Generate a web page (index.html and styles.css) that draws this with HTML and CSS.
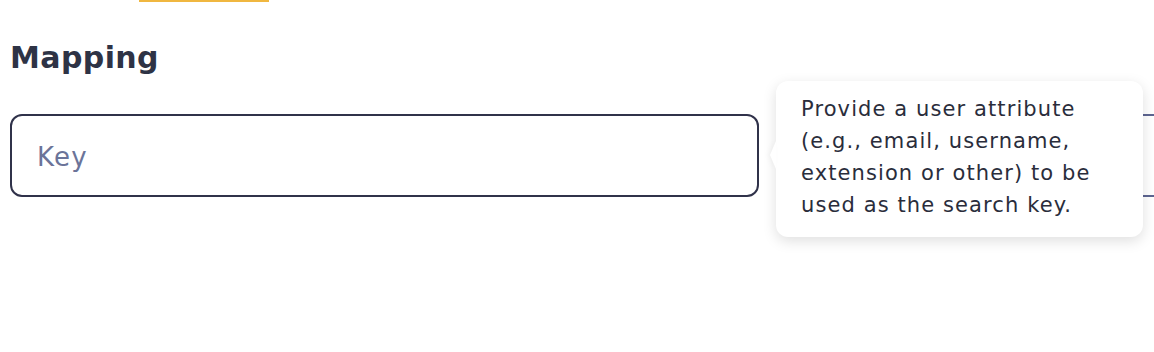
FILE: index.html
```html
<!DOCTYPE html>
<html lang="en">
<head>
  <meta charset="UTF-8">
  <meta name="viewport" content="width=device-width, initial-scale=1.0">
  <title>Mapping</title>
  <link rel="stylesheet" href="styles.css">
</head>
<body>

<div class="tab-indicator"></div>
<h2 class="section-title">Mapping</h2>
<div class="fields">
  <div class="field"><input type="text" class="key-input" placeholder="Key"></div>
  <div class="field field-value">
    <input type="text" class="value-input" placeholder="Value">
    <div class="tooltip">Provide a user attribute (e.g., email, username, extension or other) to be used as the search key.</div>
  </div>
</div>

</body>
</html>
```

FILE: styles.css
```css
html, body { height: 100%; }
body { font-family: "DejaVu Sans", sans-serif; background-color: #fff; margin: 0; padding: 0 0 0 10px; box-sizing: border-box; color: #2e3345; }
.tab-indicator { width: 130px; height: 2px; margin-left: 129px; background-color: #f0b740; }
.section-title { font-size: 30px; font-weight: 600; line-height: 36px; margin: 38px 0 38px; letter-spacing: 0.4px; }
.fields { display: grid; grid-template-columns: 749px 1fr; gap: 18px; }
.field { position: relative; }
.field input { display: block; width: 100%; height: 83px; box-sizing: border-box; border: 2px solid #30324a; border-radius: 12px; padding: 2px 25px 0; font-family: inherit; font-size: 26px; letter-spacing: 1.2px; color: #2e3345; outline: none; }
.field input::placeholder { color: #6b7499; }
.field-value input { border-color: #5d6591; border-right: none; border-radius: 12px 0 0 12px; }
.tooltip { position: absolute; left: -1px; top: -33px; width: 317px; padding: 12px 25px 16px; background-color: #fff; border-radius: 12px; box-shadow: 0 4px 14px rgba(0, 0, 0, 0.13); font-size: 21px; line-height: 32px; letter-spacing: 1.1px; color: #2a2d3b; }
.tooltip::before { content: ""; position: absolute; left: -6px; top: 60px; border-style: solid; border-width: 14px 6px 14px 0; border-color: transparent #fff transparent transparent; filter: drop-shadow(-2px 0 2px rgba(0, 0, 0, 0.04)); }
```
